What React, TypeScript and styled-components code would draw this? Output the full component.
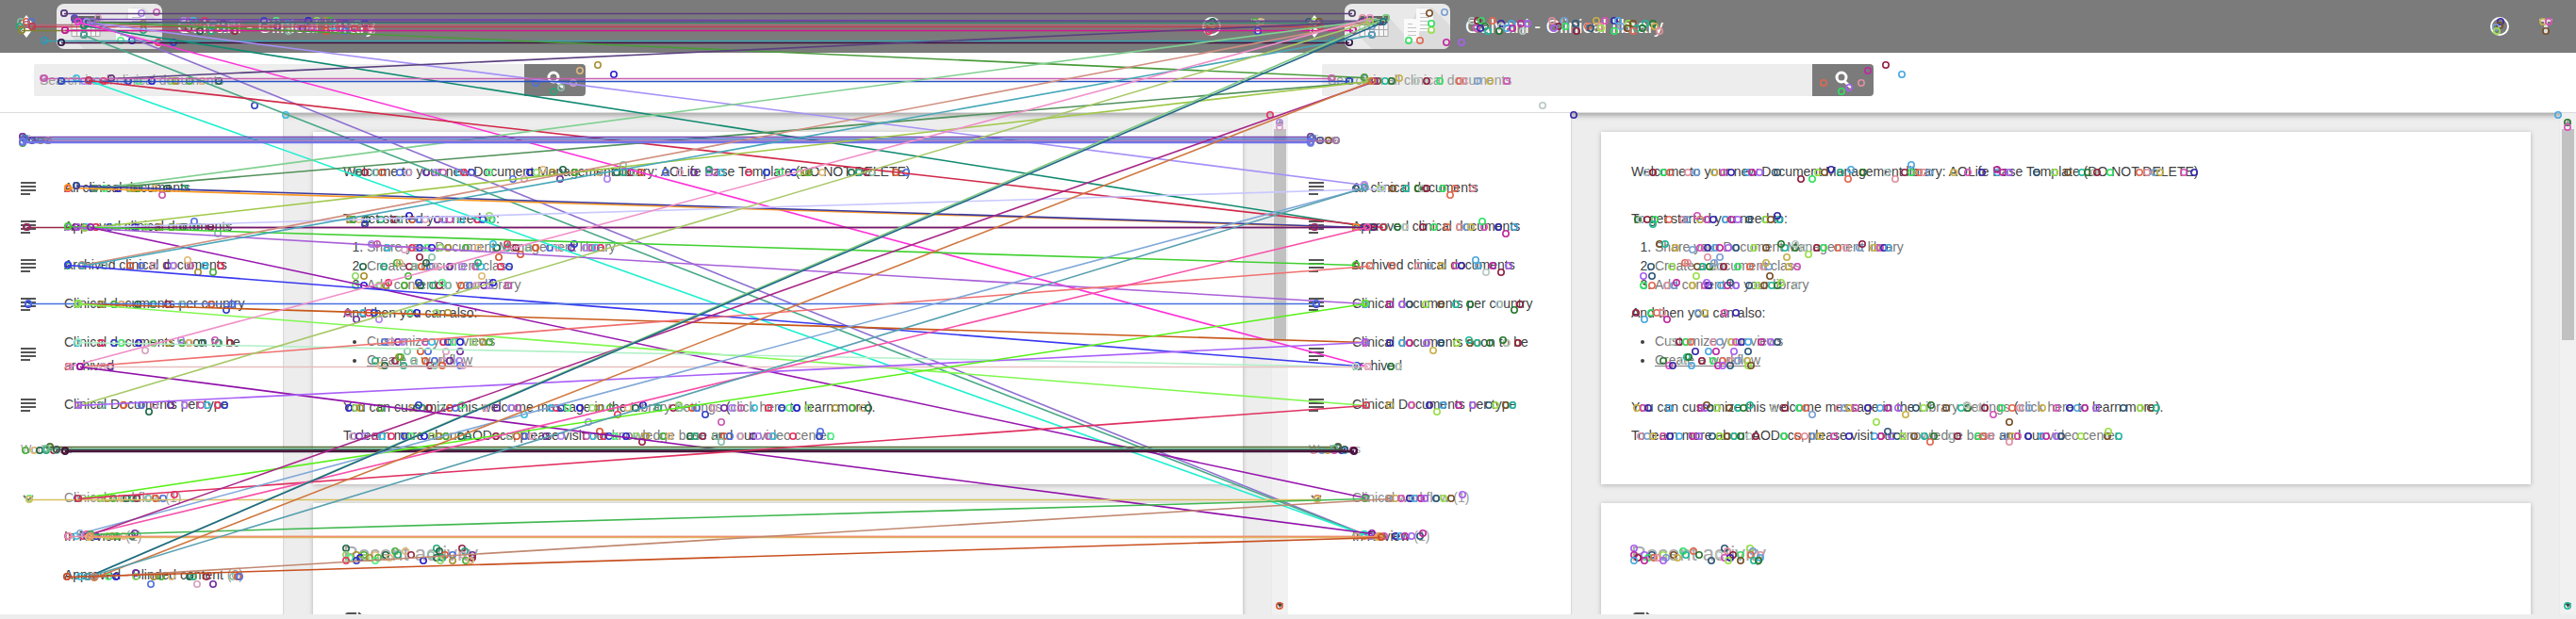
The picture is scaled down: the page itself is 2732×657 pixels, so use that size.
import React from "react";
import styled, { createGlobalStyle } from "styled-components";

const Global = createGlobalStyle`
  * { box-sizing: border-box; }
  body { margin: 0; font-family: "Liberation Sans", Arial, sans-serif; font-size: 14px; line-height: 20px; color: #404040; background: #ededed; }
`;

const Comparison = styled.div`
  position: relative;
  display: grid;
  grid-template-columns: 1fr 1fr;
  height: 100vh;
  min-height: 400px;
  overflow: hidden;
`;

const Pane = styled.div`
  display: flex;
  flex-direction: column;
  min-width: 0;
  min-height: 0;
  padding-bottom: 5px;
`;

const Header = styled.header`
  flex: none;
  display: flex;
  align-items: center;
  height: 56px;
  padding: 0 22px 0 18px;
  background: #7b7b7b;
  color: #fff;
`;

const IconButton = styled.button`
  display: flex;
  align-items: center;
  justify-content: center;
  width: 20px;
  height: 32px;
  padding: 0;
  border: 0;
  background: none;
  color: inherit;
`;

const Chip = styled.div`
  margin: 0 16px 0 22px;
  height: 48px;
  border-radius: 8px;
  overflow: hidden;
`;

const Title = styled.h1`
  flex: 1;
  margin: 0;
  font-size: 20px;
  line-height: 28px;
  font-weight: 400;
`;

const Actions = styled.div`
  display: flex;
  gap: 29px;
`;

const Toolbar = styled.div`
  position: relative;
  flex: none;
  padding: 12px 36px 17px;
  background: #fff;
  border-bottom: 1px solid #dcdcdc;
`;

const SearchForm = styled.form`
  display: flex;
  width: 60%;
  max-width: 585px;
  height: 34px;
`;

const SearchInput = styled.input`
  flex: 1;
  min-width: 0;
  padding: 0 6px;
  border: 0;
  border-radius: 2px 0 0 2px;
  background: #ededed;
  font: inherit;
  &::placeholder { color: #999; opacity: 1; }
`;

const SearchButton = styled.button`
  display: flex;
  align-items: center;
  justify-content: center;
  width: 65px;
  padding: 0;
  border: 0;
  border-radius: 0 4px 4px 0;
  background: #7b7b7b;
`;

const Body = styled.div`
  flex: 1;
  display: flex;
  min-height: 0;
  overflow: hidden;
`;

const Sidebar = styled.nav`
  flex: 0 0 301px;
  padding-top: 1px;
  background: #fff;
  border-right: 1px solid #d8d8d8;
`;

const Section = styled.section`
  padding: 17px 22px 0;
`;

const SectionLabel = styled.h2`
  margin: 0 0 21px;
  font-size: 12px;
  line-height: 20px;
  font-weight: 400;
  color: #999;
`;

const NavItem = styled.a<{ $muted?: boolean }>`
  display: flex;
  align-items: center;
  gap: 30px;
  padding: 8px 0;
  line-height: 25px;
  text-decoration: none;
  color: ${(p) => (p.$muted ? "#888" : "#404040")};
`;

const NavIcon = styled.span`
  flex: 0 0 16px;
  display: flex;
  justify-content: center;
`;

const Count = styled.span`
  color: #999;
`;

const Main = styled.main`
  flex: 1;
  min-width: 0;
  display: flex;
  flex-direction: column;
  gap: 20px;
  padding: 20px 31px 0;
  background: #ededed;
  box-shadow: inset 0 7px 5px -4px #aaa;
  overflow: hidden;
`;

const Card = styled.article`
  flex: none;
  padding: 32px 32px 42px;
  background: #fff;
  box-shadow: 0 1px 5px rgba(0, 0, 0, 0.25);
`;

const Para = styled.p<{ $wide?: boolean }>`
  margin: 0 0 ${(p) => (p.$wide ? 30 : 10)}px;
  &:last-child { margin-bottom: 0; }
`;

const Steps = styled.ol`
  margin: 0 0 10px;
  padding-left: 25px;
`;

const Extras = styled.ul`
  margin: 0 0 30px;
  padding-left: 25px;
`;

const TextLink = styled.a<{ $underlined?: boolean }>`
  color: #777;
  text-decoration: ${(p) => (p.$underlined ? "underline" : "none")};
`;

const CardHeading = styled.h2`
  margin: 0 0 40px;
  font-size: 22px;
  line-height: 44px;
  font-weight: 400;
  color: #a8a8a8;
`;

const Scrollbar = styled.div`
  flex: 0 0 17px;
  display: flex;
  flex-direction: column;
  align-items: center;
  justify-content: space-between;
  padding: 7px 0;
  background: #f1f1f1;
`;

const Track = styled.div`
  flex: 1;
  width: 13px;
  margin: 5px 0;
`;

const Thumb = styled.div`
  height: 45%;
  background: #c1c1c1;
`;

const Overlay = styled.svg`
  position: absolute;
  top: 0;
  left: 0;
  width: 100%;
  height: auto;
  pointer-events: none;
`;

const LinesIcon = () => (
  <svg width="16" height="14" viewBox="0 0 16 14" fill="#555" aria-hidden="true">
    <path d="M0 0h16v2H0zM0 4h16v2H0zM0 8h16v2H0zM0 12h10v2H0z" />
  </svg>
);

const ChevronIcon = () => (
  <svg width="12" height="8" viewBox="0 0 12 8" fill="none" stroke="#777" strokeWidth="2" aria-hidden="true">
    <path d="M1 1l5 5 5-5" />
  </svg>
);

const SwitchIcon = () => (
  <svg width="16" height="24" viewBox="0 0 16 24" fill="#fff" aria-hidden="true">
    <path d="M8 0l6 8v2H2V8zM8 24l6-8v-2H2v2z" />
  </svg>
);

const LibraryIcon = () => (
  <svg width="112" height="48" viewBox="0 0 112 48" aria-hidden="true">
    <path fill="#e9e9e9" d="M0 0h112v48H0z" />
    <path fill="#dcdcdc" d="M46 13l17 19 16-28h14l19 19v25H29L16 35z" />
    <path fill="#f5f5f5" d="M16 13h30v22H16z" />
    <path fill="#666" d="M16 13h30v7H16z" />
    <path fill="none" stroke="#aaa" d="M16 20.500h30v14H16zM16 27.500h30M21.500 20v15M26.500 20v15M31.500 20v15M36.500 20v15M41.500 20v15" />
    <path fill="#fafafa" d="M76 5h13l5 5v19H76zM63 16h12l4 4v20H63z" />
    <path fill="none" stroke="#c4c4c4" d="M80 10.500h7M80 14.500h10M80 18.500h10M80 22.500h10M80 26.500h10M67 21.500h5M67 25.500h9M67 29.500h9M67 33.500h9" />
  </svg>
);

const SearchIcon = () => (
  <svg width="20" height="20" viewBox="0 0 20 20" fill="none" stroke="#fff" strokeWidth="3" aria-hidden="true">
    <circle cx="8" cy="7" r="5" />
    <path d="M11 11l7 7" />
  </svg>
);

const CompassIcon = () => (
  <svg width="20" height="20" viewBox="0 0 20 20" aria-hidden="true">
    <circle cx="10" cy="10" r="9" fill="none" stroke="#fff" strokeWidth="2" />
    <path d="M13 6l-2 5-5 2 2-5z" fill="#bbb" />
  </svg>
);

const FilterIcon = () => (
  <svg width="14" height="18" viewBox="0 0 14 18" aria-hidden="true">
    <path d="M0 1h14v3H9v13H5V4H0z" fill="#ddd" />
  </svg>
);

const SheetIcon = () => (
  <svg width="20" height="20" viewBox="0 0 20 20" fill="none" stroke="#555" strokeWidth="2" aria-hidden="true">
    <path d="M3 19V3q0-2 2-2h9M16 0l4 4" />
  </svg>
);

const Arrow = ({ up }: { up?: boolean }) => (
  <svg width="7" height="5" viewBox="0 0 7 5" fill={up ? "#999" : "#444"} aria-hidden="true">
    <path d={up ? "M3.500 0L7 5H0z" : "M0 0h7L3.500 5z"} />
  </svg>
);

const views = [
  "All clinical documents",
  "Approved clinical documents",
  "Archived clinical documents",
  "Clinical documents per country",
  "Clinical documents soon to be archived",
  "Clinical Documents per type",
];

function LibraryPage({ id, blinded }: { id: string; blinded?: boolean }) {
  return (
    <Pane>
      <Header>
        <IconButton aria-label="Switch library"><SwitchIcon /></IconButton>
        <Chip><LibraryIcon /></Chip>
        <Title>Galvani - Clinical library</Title>
        <Actions>
          <IconButton aria-label="Explore"><CompassIcon /></IconButton>
          <IconButton aria-label="Options"><FilterIcon /></IconButton>
        </Actions>
      </Header>
      <Toolbar>
        <SearchForm>
          <SearchInput id={id} aria-label="Search" placeholder="Search in all clinical documents" />
          <SearchButton type="button" aria-label="Run search"><SearchIcon /></SearchButton>
        </SearchForm>
      </Toolbar>
      <Body>
        <Sidebar>
          <Section>
            <SectionLabel>Views</SectionLabel>
            {views.map((v) => (
              <NavItem href="#" key={v}><NavIcon><LinesIcon /></NavIcon><span>{v}</span></NavItem>
            ))}
          </Section>
          <Section>
            <SectionLabel>Workflows</SectionLabel>
            <NavItem href="#" $muted><NavIcon><ChevronIcon /></NavIcon><span>Clinical workflow <Count>(1)</Count></span></NavItem>
            <NavItem href="#"><NavIcon /><span>In Review <Count>(1)</Count></span></NavItem>
            {blinded && <NavItem href="#"><NavIcon /><span>Approved - Blinded content <Count>(0)</Count></span></NavItem>}
          </Section>
        </Sidebar>
        <Main>
          <Card>
            <Para $wide>Welcome to your new Document Management library: AOLife Base Template (DO NOT DELETE)</Para>
            <Para>To get started you need to:</Para>
            <Steps>
              <li><TextLink href="#">Share your Document Management library</TextLink></li>
              <li><TextLink href="#">Create a document class</TextLink></li>
              <li><TextLink href="#">Add content to your library</TextLink></li>
            </Steps>
            <Para>And then you can also:</Para>
            <Extras>
              <li><TextLink href="#">Customize your views</TextLink></li>
              <li><TextLink href="#" $underlined>Create a workflow</TextLink></li>
            </Extras>
            <Para>You can customize this welcome message in the <TextLink href="#">Library Settings</TextLink> (<TextLink href="#">click here</TextLink> to learn more).</Para>
            <Para>To learn more about AODocs, please visit our <TextLink href="#">knowledge base</TextLink> and our <TextLink href="#">video center</TextLink>.</Para>
          </Card>
          <Card>
            <CardHeading>Recent activity</CardHeading>
            <SheetIcon />
          </Card>
        </Main>
        <Scrollbar>
          <Arrow up />
          <Track><Thumb /></Track>
          <Arrow />
        </Scrollbar>
      </Body>
    </Pane>
  );
}

/* Keypoints detected in each page: a row height and the positions along it. */
const keypoints: [number, number[]][] = [
  [13, [166]], [14, [68, 150]], [19, [79, 104]], [23, [22, 28, 33, 83, 88, 92, 98]],
  [28, [21, 34, 89]], [32, [23, 69, 152]], [25, [152]], [37, [89]], [43, [47, 128, 140]], [45, [65, 168, 184]],
  [22, [195, 201, 205, 217, 280, 293, 327, 336, 346, 350]],
  [25, [226, 237, 247, 254, 305, 361, 366, 379, 387]],
  [28, [209, 226, 287, 294, 318, 331, 353, 389]],
  [30, [200, 204, 232, 238, 282, 321, 332, 360, 370, 376]],
  [33, [212, 224, 249, 306, 346, 366, 394]],
  [23, [1331, 1337, 1286]], [27, [1285]], [29, [1281]], [33, [1282, 1334]],
  [83, [47, 81, 118]], [86, [65, 89, 95, 103, 110, 136, 147, 161, 182, 186, 201, 214, 232]],
  [88, [568, 608]], [93, [595]], [97, [587]], [75, [615]], [69, [634]], [79, [651]], [112, [270]], [122, [303, 1347]],
  [130, [1357]], [135, [1357]], [643, [1357]],
  [145, [24]], [147, [26]], [152, [24]], [149, [34, 43, 51]],
  [197, [81]], [200, [72, 98, 111, 125, 138, 142, 147, 164, 177, 196]], [207, [172]],
  [241, [29, 72, 82, 91, 102, 116, 124, 143, 155, 169, 182, 189, 194, 208, 223, 240]], [235, [206]], [248, [231]],
  [282, [72, 87, 110, 138, 150, 163, 178, 184, 202, 217, 234]], [276, [199]], [289, [210, 226]],
  [323, [30, 82, 108, 121, 129, 146, 162, 178, 193, 224, 246]], [329, [240]],
  [364, [82, 108, 121, 129, 147, 162, 179, 193, 201, 214, 232, 244]], [361, [192, 228]], [372, [154]],
  [389, [73, 85, 109, 117]],
  [430, [83, 108, 131, 150, 164, 181, 196, 213, 220, 231, 238]], [437, [158]],
  [478, [27, 36, 42, 49, 57, 60, 69]], [475, [53]], [529, [31, 82, 107, 114, 120, 129, 134, 141, 145, 157, 165, 173]], [525, [185]],
  [569, [72, 81, 88, 92, 98, 102, 114, 119, 124, 131, 140]], [566, [143]],
  [190, [544, 556, 594, 644]], [175, [661]],
  [183, [380, 387, 398, 405, 424, 433, 452, 462, 470, 487, 492, 500, 519, 562, 569, 586, 610, 635, 654, 661, 669, 674, 680, 706, 721, 736, 752, 758, 765, 794, 813, 827, 842, 848, 855, 858, 872, 903, 911, 919, 925, 950, 961]],
  [180, [576, 597, 752]],
  [233, [371, 374, 381, 389, 404, 419, 423, 437, 444, 451, 464, 470, 477, 489, 506, 512, 521]], [229, [434, 519]], [238, [387]],
  [263, [411, 437, 445, 453, 458, 467, 475, 494, 507, 527, 538, 547, 561, 568, 583, 592, 606, 621, 628, 632, 637]],
  [259, [394, 400, 523, 538, 609]], [265, [429]], [270, [552]], [273, [445, 458, 529]],
  [283, [385, 407, 434, 440, 447, 456, 462, 477, 490, 504, 510, 531, 540]], [279, [421, 424, 452, 507]], [293, [377, 386, 433, 511]],
  [303, [377, 386, 402, 409, 429, 442, 446, 459, 466, 475, 489, 498, 505, 513, 519, 539]], [300, [412, 444, 469, 523]],
  [332, [369, 385, 391, 397, 435, 442, 463, 475]], [339, [378, 402]],
  [363, [408, 415, 422, 427, 451, 458, 470, 475, 481, 488, 502, 512, 519]], [373, [432, 446, 454, 473, 488]],
  [383, [398, 419, 439, 451, 461, 471, 477, 487]], [388, [404, 408, 428, 456, 461, 469, 488, 491]], [379, [423, 425]],
  [433, [370, 377, 382, 404, 438, 442, 448, 455, 468, 477, 483, 515, 527, 542, 549, 584, 590, 595, 602, 615, 628, 636, 647, 666, 674, 698, 714, 721, 734, 739, 757, 768, 776, 786, 800, 815, 829, 837, 845, 857, 886, 904, 915, 921]],
  [430, [444, 490, 682, 720]], [440, [556, 655, 748]], [448, [624, 765]],
  [463, [374, 381, 387, 398, 405, 415, 429, 436, 450, 458, 466, 473, 480, 489, 496, 526, 541, 548, 557, 564, 579, 595, 622, 629, 640, 646, 652, 664, 675, 685, 703, 710, 732, 737, 745, 759, 768, 774, 785, 799, 804, 815, 820, 841, 869, 881]],
  [458, [636, 870]], [469, [681, 765]],
  [582, [367, 463, 490]], [585, [419, 430, 466, 493]],
  [589, [367, 378, 386, 398, 409, 422, 436, 457, 472, 480, 491, 501]],
  [592, [371, 382, 388, 392, 401, 413, 463, 469, 501]], [595, [367, 378, 398, 449, 467, 480, 494, 499]],
];

/* Only the left page lists the blinded workflow state. */
const leftOnly: [number, number[]][] = [
  [612, [71, 85, 93, 100, 115, 123, 144, 163, 171, 182, 201, 205, 219, 247, 252, 254]], [608, [144]], [620, [160, 209, 226]],
];

const leftPalette = ["#c858b0", "#28a878", "#3040c8", "#d85830", "#90d868", "#7030a0", "#e0b878", "#38c0e0", "#982848", "#50f080", "#5070e0", "#a89030", "#b080f0", "#206848", "#e83060", "#88c0a8", "#2820d0", "#d8a0c0", "#48b038"];
const rightPalette = ["#78a0d0", "#c028a0", "#20b898", "#e06850", "#3828a8", "#98e048", "#902040", "#c8b048", "#a860f0", "#287830", "#e090a0", "#48a8e0", "#785028", "#30e060", "#d850b8", "#305878", "#b8c8c0"];

const matches: [number, number, number, number, string][] = [
  [68, 14, 1434, 14, "#5b3f7a"], [79, 20, 1450, 22, "#7040b0"], [92, 24, 1458, 24, "#3a8a72"], [28, 26, 1394, 26, "#b06a78"],
  [98, 23, 1450, 22, "#605080"], [34, 28, 1400, 28, "#c04050"], [23, 32, 1389, 32, "#808030"], [69, 32, 1435, 32, "#d8149c"],
  [47, 43, 1413, 43, "#38a0b0"], [65, 45, 1431, 45, "#401040"], [98, 23, 1447, 82, "#4a9a3a"], [89, 27, 1455, 241, "#0f8a70"],
  [92, 23, 1447, 196, "#a590f8"], [83, 23, 1451, 389, "#ff30d8"], [98, 23, 1453, 569, "#8f70d0"], [89, 37, 1447, 567, "#4aa888"],
  [94, 85, 1447, 567, "#20f0d0"], [118, 83, 1444, 23, "#5a4080"], [46, 83, 1412, 83, "#c860b0"], [65, 86, 1431, 86, "#2850c0"],
  [94, 85, 1467, 241, "#d02848"], [100, 200, 1470, 19, "#80d090"], [100, 200, 1456, 86, "#50905a"], [72, 199, 1438, 241, "#ff9820"],
  [81, 197, 1447, 241, "#3a3aa0"], [24, 145, 1390, 145, "#7040b0"], [26, 147, 1392, 147, "#4878c8"], [34, 149, 1400, 149, "#6048a8"],
  [51, 149, 1417, 149, "#b070a8"], [24, 150, 1390, 150, "#7080e8"], [24, 151, 1390, 151, "#7070e8"], [28, 241, 1394, 241, "#982848"],
  [80, 241, 1457, 241, "#701870"], [90, 242, 1452, 86, "#a0c848"], [96, 241, 1466, 200, "#c8c8ff"], [72, 240, 1438, 281, "#40d030"],
  [82, 241, 1448, 322, "#a860d8"], [96, 241, 1448, 528, "#9818b0"], [87, 281, 1450, 23, "#d09080"], [87, 282, 1455, 37, "#48a8b8"],
  [72, 281, 1439, 388, "#3838f0"], [30, 322, 1396, 322, "#4870e0"], [83, 322, 1448, 363, "#c85818"], [83, 322, 1449, 430, "#80f850"],
  [83, 363, 1438, 389, "#b0f0c8"], [73, 389, 1453, 19, "#f090c8"], [85, 389, 1453, 282, "#f07070"], [85, 389, 1451, 389, "#e8c0c0"],
  [85, 389, 1455, 566, "#9010a8"], [83, 430, 1453, 23, "#a8c868"], [83, 430, 1448, 363, "#a860f8"], [53, 474, 1419, 474, "#506830"],
  [49, 476, 1415, 476, "#60b890"], [60, 477, 1426, 477, "#3a5850"], [69, 478, 1436, 478, "#601838"], [69, 479, 1436, 479, "#401840"],
  [31, 530, 1397, 530, "#d8c060"], [83, 529, 1448, 322, "#58f018"], [83, 529, 1449, 430, "#e03060"], [85, 566, 1448, 199, "#80a8d8"],
  [92, 567, 1450, 241, "#f850a8"], [96, 567, 1458, 86, "#a82888"], [96, 567, 1448, 529, "#40b850"], [73, 569, 1439, 569, "#e890a8"],
  [94, 570, 1461, 570, "#d8c060"], [96, 569, 1462, 569, "#f0906a"], [93, 612, 1470, 19, "#80c880"], [93, 612, 1467, 23, "#206888"],
  [100, 613, 1455, 86, "#d07840"], [93, 612, 1447, 199, "#58a0b0"], [100, 612, 1474, 529, "#c08870"], [71, 612, 1465, 570, "#c85020"],
];

const Points = ({ rows, shift, palette }: { rows: [number, number[]][]; shift: number; palette: string[] }) => (
  <g fill="none" strokeWidth="1.600">
    {rows.flatMap(([y, xs], r) =>
      xs.map((x, i) => (
        <circle key={`${r}-${i}`} cx={x + shift} cy={y} r="3.200" stroke={palette[(r * 5 + i * 7) % palette.length]} />
      ))
    )}
  </g>
);

export default function App() {
  return (
    <>
      <Global />
      <Comparison>
        <LibraryPage id="search-before" blinded />
        <LibraryPage id="search-after" />
        <Overlay viewBox="0 0 2732 657" aria-hidden="true">
          <Points rows={keypoints} shift={0} palette={leftPalette} />
          <Points rows={leftOnly} shift={0} palette={leftPalette} />
          <Points rows={keypoints} shift={1366} palette={rightPalette} />
          {matches.map(([x1, y1, x2, y2, c], i) => (
            <g key={i} stroke={c} fill="none" strokeWidth="1.600">
              <line x1={x1} y1={y1 + 0.5} x2={x2} y2={y2 + 0.5} />
              <circle cx={x1} cy={y1} r="3.200" />
              <circle cx={x2} cy={y2} r="3.200" />
            </g>
          ))}
        </Overlay>
      </Comparison>
    </>
  );
}
